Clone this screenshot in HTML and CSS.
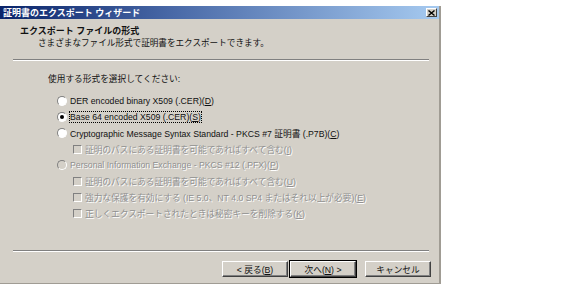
FILE: index.html
```html
<!DOCTYPE html>
<html lang="ja">
<head>
    <meta charset="UTF-8">
    <title>証明書のエクスポート ウィザード</title>
    <link rel="stylesheet" href="styles.css">
</head>
<body>
    <div class="dialog">
        <div class="titlebar">
            <span class="title">証明書のエクスポート ウィザード</span>
            <span class="close">
                <svg width="7" height="6" viewBox="0 0 7 6"><path d="M0.5 0.5 L6.5 5.5 M6.5 0.5 L0.5 5.5" stroke="#000" stroke-width="1.4"/></svg>
            </span>
        </div>

        <div class="header">
            <div class="header-title">エクスポート ファイルの形式</div>
            <div class="header-sub">さまざまなファイル形式で証明書をエクスポートできます。</div>
        </div>

        <div class="sep sep-top"></div>

        <div class="content">
            <div class="prompt">使用する形式を選択してください:</div>

            <div class="option">
                <span class="radio"></span>
                <span>DER encoded binary X509 (.CER)(<u>D</u>)</span>
            </div>
            <div class="option">
                <span class="radio checked"></span>
                <span class="focus">Base 64 encoded X509 (.CER)(<u>S</u>)</span>
            </div>
            <div class="option">
                <span class="radio"></span>
                <span>Cryptographic Message Syntax Standard - PKCS #7 証明書 (.P7B)(<u>C</u>)</span>
            </div>
            <div class="option sub disabled">
                <span class="check"></span>
                <span>証明のパスにある証明書を可能であればすべて含む(<u>I</u>)</span>
            </div>
            <div class="option disabled">
                <span class="radio"></span>
                <span>Personal Information Exchange - PKCS #12 (.PFX)(<u>P</u>)</span>
            </div>
            <div class="option sub disabled">
                <span class="check"></span>
                <span>証明のパスにある証明書を可能であればすべて含む(<u>U</u>)</span>
            </div>
            <div class="option sub disabled">
                <span class="check"></span>
                <span>強力な保護を有効にする (IE 5.0、NT 4.0 SP4 またはそれ以上が必要)(<u>E</u>)</span>
            </div>
            <div class="option sub disabled">
                <span class="check"></span>
                <span>正しくエクスポートされたときは秘密キーを削除する(<u>K</u>)</span>
            </div>
        </div>

        <div class="sep sep-bottom"></div>

        <div class="buttons">
            <button class="btn">&lt; 戻る(<u>B</u>)</button>
            <button class="btn default">次へ(<u>N</u>) &gt;</button>
            <button class="btn cancel">キャンセル</button>
        </div>
    </div>
</body>
</html>
```

FILE: styles.css
```css
body {
    margin: 0;
    background: #fff;
    font-family: "Liberation Sans", "Noto Sans CJK JP", sans-serif;
    font-size: 8.7px;
    color: #111;
}
.dialog {
    width: 439px;
    height: 277px;
    margin-top: 6px;
    background: #d4d0c8;
    border-right: 2px solid #a09c94;
    border-bottom: 1px solid #a09c94;
}
.titlebar {
    height: 13px;
    display: flex;
    align-items: center;
    justify-content: space-between;
    background: linear-gradient(to right, #0a246a, #4a6aa8 40%, #a6caf0);
}
.title {
    color: #fff;
    font-weight: bold;
    font-size: 9px;
    padding-left: 3px;
}
.close {
    width: 11px;
    height: 9px;
    margin-right: 2px;
    display: flex;
    align-items: center;
    justify-content: center;
    background: #d4d0c8;
    border: 1px solid;
    border-color: #fff #404040 #404040 #fff;
    box-sizing: border-box;
}
.header {
    height: 40px;
    padding-left: 20px;
    box-sizing: border-box;
    padding-top: 7px;
}
.header-title {
    font-weight: bold;
    font-size: 9px;
    line-height: 11px;
}
.header-sub {
    padding-left: 18px;
    line-height: 12px;
    font-size: 8.6px;
}
.sep {
    height: 1px;
    background: #808080;
    border-bottom: 1px solid #fff;
    margin-left: 13px;
    margin-right: 10px;
}
.content {
    padding-left: 48px;
    padding-top: 11px;
    height: 189px;
    box-sizing: border-box;
}
.prompt {
    line-height: 14px;
    margin-bottom: 7px;
}
.option {
    display: flex;
    align-items: center;
    height: 16px;
    padding-left: 9px;
    white-space: nowrap;
}
.option.sub {
    padding-left: 25px;
}
.option.disabled {
    color: #909090;
    text-shadow: 1px 1px 0 #fff;
}
.radio {
    width: 10px;
    height: 10px;
    border-radius: 50%;
    box-sizing: border-box;
    border: 1px solid;
    border-color: #808080 #fff #fff #808080;
    background: #fff;
    margin-right: 3px;
    position: relative;
}
.option.disabled .radio {
    background: #d4d0c8;
}
.radio.checked::after {
    content: "";
    position: absolute;
    left: 2px;
    top: 2px;
    width: 4px;
    height: 4px;
    border-radius: 50%;
    background: #000;
}
.check {
    width: 9px;
    height: 9px;
    box-sizing: border-box;
    border: 1px solid;
    border-color: #808080 #fff #fff #808080;
    background: #d4d0c8;
    margin-right: 3px;
}
.focus {
    outline: 1px dotted #000;
    outline-offset: 0;
}
.buttons {
    display: flex;
    justify-content: flex-end;
    gap: 2px;
    padding-top: 9px;
    padding-right: 8px;
}
.btn {
    width: 66px;
    height: 16px;
    padding: 0;
    font-family: "Liberation Sans", "Noto Sans CJK JP", sans-serif;
    font-size: 8.7px;
    color: #111;
    background: #d4d0c8;
    border: 1px solid;
    border-color: #fff #404040 #404040 #fff;
    box-shadow: inset -1px -1px 0 #808080;
}
.btn.default {
    outline: 1px solid #000;
}
.btn.cancel {
    margin-left: 7px;
}
```
